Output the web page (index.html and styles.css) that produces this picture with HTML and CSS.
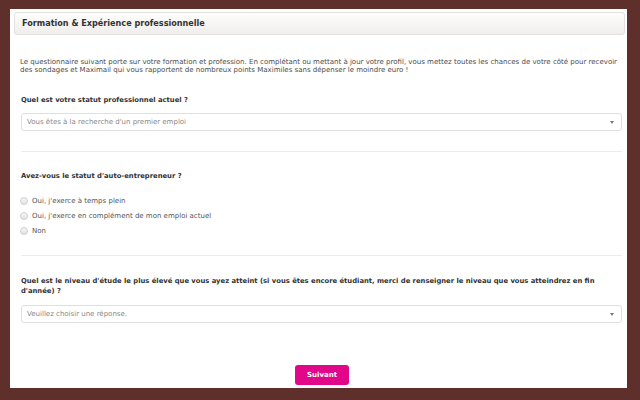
FILE: index.html
```html
<!DOCTYPE html>
<html lang="fr">
<head>
  <meta charset="UTF-8">
  <title>Formation &amp; Expérience professionnelle</title>
  <link rel="stylesheet" href="styles.css">
</head>
<body>
  <div class="container">
    <div class="panel-title">Formation &amp; Expérience professionnelle</div>
    <p class="intro">Le questionnaire suivant porte sur votre formation et profession. En complétant ou mettant à jour votre profil, vous mettez toutes les chances de votre côté pour recevoir des sondages et Maximail qui vous rapportent de nombreux points Maximiles sans dépenser le moindre euro !</p>

    <div class="question">
      <div class="label">Quel est votre statut professionnel actuel ?</div>
      <div class="select">Vous êtes à la recherche d'un premier emploi<span class="arrow"></span></div>
    </div>

    <div class="question choice">
      <div class="label">Avez-vous le statut d'auto-entrepreneur ?</div>
      <div class="radios">
        <label><span class="radio"></span>Oui, j'exerce à temps plein</label>
        <label><span class="radio"></span>Oui, j'exerce en complément de mon emploi actuel</label>
        <label><span class="radio"></span>Non</label>
      </div>
    </div>

    <div class="question last">
      <div class="label">Quel est le niveau d'étude le plus élevé que vous ayez atteint (si vous êtes encore étudiant, merci de renseigner le niveau que vous atteindrez en fin d'année) ?</div>
      <div class="select">Veuillez choisir une réponse.<span class="arrow"></span></div>
    </div>

    <div class="actions"><button>Suivant</button></div>
  </div>
</body>
</html>
```

FILE: styles.css
```css
body { margin: 0; padding: 9px 13px 12px 10px; background: #5f302b; font-family: "DejaVu Sans", Verdana, sans-serif; color: #333; }
.container { background: white; padding: 3px 2px 4px 4px; height: 379px; box-sizing: border-box; }
.panel-title { height: 21px; line-height: 21px; padding-left: 7px; font-size: 8.1px; font-weight: bold; color: #333; background: linear-gradient(#fdfdfc, #efeeec); border: 1px solid #e2e1de; border-radius: 3px; }
.intro { margin: 23px 3px 0 6px; font-size: 7px; line-height: 8px; color: #4a4a4a; }
.question { margin: 0 3px 0 7px; padding: 21px 0 20px; border-bottom: 1px solid #ececec; }
.question + .question { padding-top: 19px; }
.question.choice { padding-bottom: 17px; }
.question.last { border-bottom: none; padding-top: 20px; padding-bottom: 18px; }
.question.last .label { margin-bottom: 9px; }
.label { font-size: 6.8px; font-weight: bold; line-height: 10px; color: #333; margin-bottom: 8px; }
.select { position: relative; height: 16px; line-height: 16px; padding-left: 5px; border: 1px solid #e0dfdb; border-radius: 3px; font-size: 7px; color: #888; }
.arrow { position: absolute; right: 7px; top: 7px; border-left: 2px solid transparent; border-right: 2px solid transparent; border-top: 3px solid #777; }
.radios { margin-top: 12px; }
.radios label { display: flex; align-items: center; height: 15px; font-size: 7px; color: #555; }
.radio { width: 6px; height: 6px; margin: 0 4px 0 -1px; border: 1px solid #cfcfcf; border-radius: 50%; background: linear-gradient(#f6f6f6, #e2e2e2); }
.actions { text-align: center; margin-top: 21px; padding-left: 5px; }
button { background: #e2068b; color: white; border: none; border-radius: 3px; font-family: inherit; font-size: 7px; font-weight: bold; width: 54px; height: 20px; padding: 0; }
```
